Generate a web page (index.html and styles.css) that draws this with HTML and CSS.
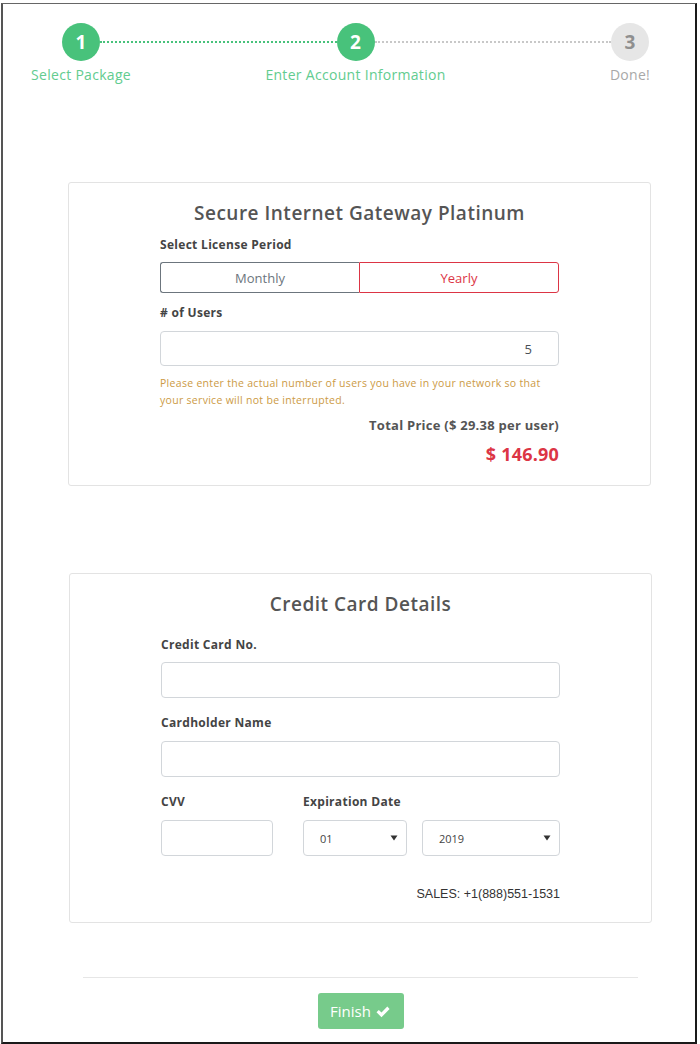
FILE: index.html
```html
<!DOCTYPE html>
<html>
<head>
<meta charset="utf-8">
<link rel="stylesheet" href="styles.css">
</head>
<body>
<div class="frame">
  <div class="steps">
    <div class="step">
      <div class="circle done">1</div>
      <div class="step-label">Select Package</div>
    </div>
    <div class="line green"></div>
    <div class="step">
      <div class="circle done">2</div>
      <div class="step-label">Enter Account Information</div>
    </div>
    <div class="line gray"></div>
    <div class="step">
      <div class="circle todo">3</div>
      <div class="step-label muted">Done!</div>
    </div>
  </div>

  <div class="content">
    <div class="card card-package">
      <h2 class="card-title">Secure Internet Gateway Platinum</h2>
      <div class="col">
        <div class="label l1">Select License Period</div>
        <div class="toggle">
          <div class="tbtn monthly">Monthly</div>
          <div class="tbtn yearly">Yearly</div>
        </div>
        <div class="label l2"># of Users</div>
        <div class="input users">5</div>
        <p class="help">Please enter the actual number of users you have in your network so that your service will not be interrupted.</p>
        <div class="total">Total Price ($ 29.38 per user)</div>
        <div class="price">$ 146.90</div>
      </div>
    </div>

    <div class="card card-cc">
      <h2 class="card-title">Credit Card Details</h2>
      <div class="col">
        <div class="label c1">Credit Card No.</div>
        <div class="input field"></div>
        <div class="label c2">Cardholder Name</div>
        <div class="input field"></div>
        <div class="row3">
          <div class="cvv-col">
            <div class="label">CVV</div>
            <div class="input field small"></div>
          </div>
          <div class="exp-col">
            <div class="label">Expiration Date</div>
            <div class="selects">
              <div class="input sel month"><span>01</span><svg width="8" height="6" viewBox="0 0 8 6"><path d="M0.5 0.5h7L4 5.5z" fill="#333"/></svg></div>
              <div class="input sel year"><span>2019</span><svg width="8" height="6" viewBox="0 0 8 6"><path d="M0.5 0.5h7L4 5.5z" fill="#333"/></svg></div>
            </div>
          </div>
        </div>
        <div class="sales">SALES: +1(888)551-1531</div>
      </div>
    </div>

    <div class="divider"></div>
    <div class="actions">
      <div class="finish">Finish <svg width="16" height="13" viewBox="0 0 16 13"><path d="M1.5 7.2l2.3-2.3 2.7 2.7 5.8-6 2.3 2.3-8.1 8.3z" fill="#fff"/></svg></div>
    </div>
  </div>
</div>
</body>
</html>
```

FILE: styles.css
```css
* { box-sizing: border-box; }
html, body { margin: 0; padding: 0; background: #fff; }
body { font-family: "Open Sans", "DejaVu Sans", sans-serif; color: #555; }

.frame {
  margin: 3px 0 0 1px;
  width: 696px;
  height: 1041px;
  border: 1px solid #666;
  border-left: 2px solid #555;
  border-right: 2px solid #1a1a1a;
  border-bottom: 2px solid #1a1a1a;
}

.steps {
  display: flex;
  align-items: flex-start;
  padding: 19px 46px 0 59px;
}
.step {
  width: 38px;
  display: flex;
  flex-direction: column;
  align-items: center;
}
.circle {
  width: 38px;
  height: 38px;
  border-radius: 50%;
  display: flex;
  align-items: center;
  justify-content: center;
  font-size: 19px;
  font-weight: 700;
}
.circle.done { background: #48c27b; color: #fff; }
.circle.todo { background: #e6e6e6; color: #8f8f8f; }
.step-label {
  margin-top: 6px;
  white-space: nowrap;
  font-size: 14px;
  line-height: 16px;
  letter-spacing: 0.3px;
  color: #62cc8f;
  font-weight: 500;
}
.step-label.muted { color: #a8a8a8; }
.line {
  flex: 1;
  margin-top: 18px;
  border-top: 2px dotted;
}
.line.green { border-color: #48c27b; }
.line.gray { border-color: #c8c8c8; }

.content {
  margin: 99px 0 0 65px;
  width: 585px;
}
.card {
  width: 583px;
  border: 1px solid #e3e3e3;
  border-radius: 3px;
  padding: 18px 0 19px;
}
.card-cc { margin: 87px 0 0 1px; padding-bottom: 20px; }
.card-title {
  margin: 0;
  text-align: center;
  font-size: 19px;
  line-height: 24px;
  letter-spacing: 0.5px;
  font-weight: 600;
  color: #555;
}
.col {
  width: 399px;
  margin: 0 auto;
}
.label {
  font-size: 12px;
  line-height: 16px;
  letter-spacing: 0.3px;
  font-weight: 700;
  color: #444;
}
.l1 { margin-top: 12px; }
.toggle {
  margin-top: 9px;
  display: flex;
  height: 31px;
}
.tbtn {
  flex: 1;
  display: flex;
  align-items: center;
  justify-content: center;
  font-size: 13px;
  border-radius: 3px;
}
.monthly { border: 1px solid #6c757d; border-right: none; border-radius: 3px 0 0 3px; color: #6c757d; }
.yearly { border: 1px solid #dc3545; border-radius: 0 3px 3px 0; color: #dc3545; }
.l2 { margin-top: 12px; }
.input {
  border: 1px solid #d2d6da;
  border-radius: 4px;
  background: #fff;
}
.users {
  margin-top: 10px;
  height: 35px;
  display: flex;
  align-items: center;
  justify-content: flex-end;
  padding-right: 26px;
  font-size: 13px;
  color: #495057;
}
.help {
  margin: 9px 0 0;
  font-size: 10.5px;
  line-height: 17px;
  letter-spacing: 0.3px;
  color: #cc9a45;
}
.total {
  margin-top: 7px;
  text-align: right;
  font-size: 13px;
  line-height: 18px;
  letter-spacing: 0.25px;
  font-weight: 700;
  color: #555;
}
.price {
  margin-top: 8px;
  text-align: right;
  font-size: 18px;
  line-height: 24px;
  letter-spacing: 0.2px;
  font-weight: 700;
  color: #dc3545;
}

.c1 { margin-top: 21px; }
.c2 { margin-top: 17px; }
.field { height: 36px; margin-top: 9px; }
.c2 + .field { margin-top: 10px; }
.row3 {
  margin-top: 17px;
  display: flex;
  gap: 30px;
}
.cvv-col { width: 112px; }
.small { margin-top: 10px; }
.exp-col { flex: 1; }
.selects {
  margin-top: 10px;
  display: flex;
  gap: 15px;
}
.sel {
  height: 36px;
  display: flex;
  align-items: center;
  justify-content: space-between;
  padding: 0 8px 0 16px;
  font-size: 11px;
  color: #444;
}
.month { width: 104px; }
.year { flex: 1; }
.sales {
  margin-top: 30px;
  text-align: right;
  font-family: "Liberation Sans", Arial, sans-serif;
  font-size: 12.5px;
  line-height: 16px;
  color: #333;
}

.divider {
  margin: 54px 15px 0;
  border-top: 1px solid #e6e6e6;
}
.actions {
  display: flex;
  justify-content: center;
  margin-top: 15px;
}
.finish {
  width: 86px;
  height: 36px;
  border-radius: 3px;
  background: #77cb8b;
  color: #fff;
  font-size: 15px;
  display: flex;
  align-items: center;
  justify-content: center;
  gap: 4px;
}
```
